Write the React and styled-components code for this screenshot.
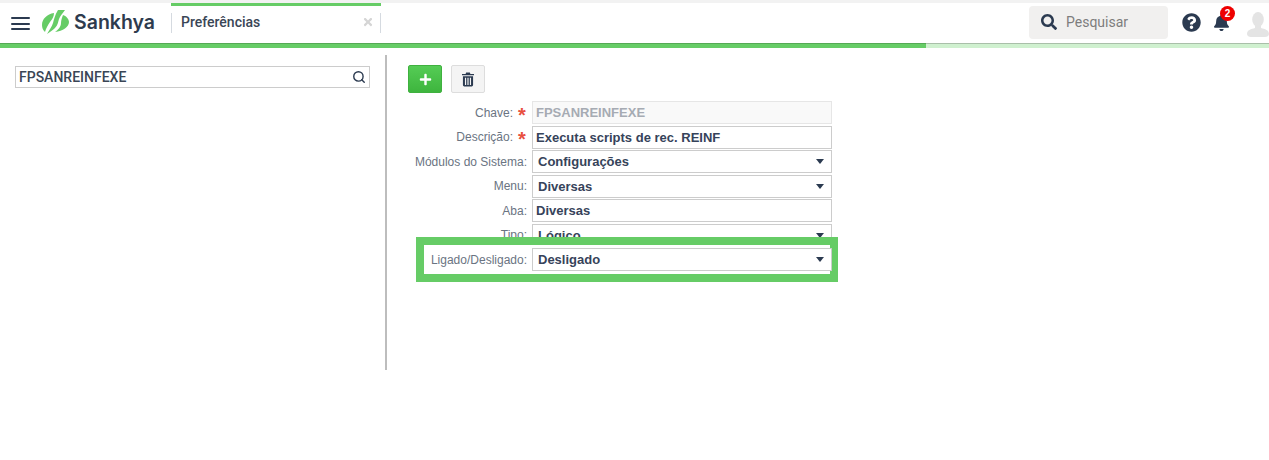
import React from 'react';
import styled, { createGlobalStyle } from 'styled-components';
import { FaSearch, FaQuestionCircle, FaBell, FaPlus, FaTimes } from 'react-icons/fa';
import { Search } from 'lucide-react';

const GlobalStyle = createGlobalStyle`
  html, body { margin: 0; padding: 0; background: #fff; }
  body { font-family: "Liberation Sans", Arial, sans-serif; }
`;

const Page = styled.div`
  width: 1269px;
  height: 460px;
  overflow: hidden;
  background: #fff;
  border-top: 3px solid #f2f2f2;
  box-sizing: border-box;
`;

const Header = styled.header`
  display: flex;
  align-items: stretch;
  height: 40px;
`;

const MenuButton = styled.div`
  width: 19px;
  margin: 14px 0 0 11px;
  height: 13px;
  display: flex;
  flex-direction: column;
  gap: 3.5px;
  span {
    display: block;
    height: 2px;
    background: #2b3a50;
    border-radius: 1px;
  }
`;

const Brand = styled.div`
  display: flex;
  align-items: center;
  gap: 5px;
  margin-left: 11px;
  width: 130px;
  padding-bottom: 3px;
`;

const BrandName = styled.span`
  font-family: Inter, "Open Sans", sans-serif;
  font-size: 19.5px;
  font-weight: 600;
  color: #2e3b4e;
`;

const Tab = styled.div`
  position: relative;
  width: 210px;
  box-sizing: border-box;
  border-top: 3px solid #66cc66;
  display: flex;
  align-items: center;
  justify-content: space-between;
  padding: 0 7px 6px 10px;
  font-family: Roboto, sans-serif;
  font-size: 14px;
  font-weight: 500;
  color: #3a4656;
  &::before, &::after {
    content: '';
    position: absolute;
    top: 7px;
    height: 20px;
    width: 1px;
    background: #d5dae0;
  }
  &::before { left: 0; }
  &::after { right: 0; }
`;

const TabClose = styled(FaTimes)`
  color: #d5d5d5;
  font-size: 12px;
`;

const HeaderRight = styled.div`
  margin-left: auto;
  display: flex;
  align-items: center;
  padding-bottom: 2px;
`;

const SearchPill = styled.div`
  width: 139px;
  height: 33px;
  box-sizing: border-box;
  padding-left: 12px;
  display: flex;
  align-items: center;
  gap: 9px;
  background: #f1f0ef;
  border-radius: 4px;
  font-family: Roboto, sans-serif;
  font-size: 14px;
  color: #7d7d7d;
  svg { color: #2b3a50; font-size: 16px; }
`;

const HelpIcon = styled(FaQuestionCircle)`
  color: #2b3a50;
  font-size: 19px;
  margin-left: 14px;
`;

const BellWrap = styled.div`
  position: relative;
  margin-left: 12px;
  width: 18px;
  height: 18px;
  color: #2b3a50;
  font-size: 17px;
  display: flex;
  align-items: center;
`;

const Badge = styled.span`
  position: absolute;
  top: -7px;
  left: 7px;
  width: 15px;
  height: 15px;
  border-radius: 50%;
  background: #ee0000;
  color: #fff;
  font-size: 10px;
  font-weight: 700;
  line-height: 15px;
  text-align: center;
`;

const Avatar = styled.svg`
  width: 22px;
  height: 25px;
  margin: 5px 0 0 16px;
`;

const Progress = styled.div`
  display: flex;
  height: 5px;
`;

const ProgressDone = styled.div`
  width: 926px;
  background: #66cc66;
  border-top: 1px solid #55a955;
  box-sizing: border-box;
`;

const ProgressRest = styled.div`
  flex: 1;
  background: #cff0cf;
  border-top: 1px solid #a9bfa9;
  box-sizing: border-box;
`;

const Body = styled.div`
  display: flex;
  align-items: flex-start;
`;

const Sidebar = styled.aside`
  width: 387px;
  height: 315px;
  margin-top: 7px;
  box-sizing: border-box;
  padding: 11px 15px 0 15px;
  border-right: 2px solid #bdbdbd;
  flex: none;
`;

const SearchBox = styled.div`
  height: 22px;
  box-sizing: border-box;
  border: 1px solid #cccccc;
  display: flex;
  align-items: center;
  justify-content: space-between;
  padding: 0 3px 0 3px;
  font-family: Roboto, sans-serif;
  font-size: 14px;
  font-weight: 500;
  color: #3a4656;
  svg { color: #2b3a50; }
`;

const Main = styled.main`
  padding: 17px 0 0 21px;
`;

const Toolbar = styled.div`
  display: flex;
  gap: 9px;
  margin-bottom: 7.5px;
`;

const ToolButton = styled.button`
  width: 34px;
  height: 28px;
  padding: 0;
  box-sizing: border-box;
  display: flex;
  align-items: center;
  justify-content: center;
  border-radius: 2px;
  border: 1px solid ${p => (p.$primary ? '#3fb13f' : '#dddddd')};
  background: ${p => (p.$primary ? 'linear-gradient(#55cc55, #3eb53e)' : '#f4f4f4')};
  color: ${p => (p.$primary ? '#fff' : '#2b3a50')};
  svg { font-size: 13px; }
`;

const Form = styled.div`
  display: flex;
  flex-direction: column;
  width: 424px;
`;

const Row = styled.div`
  display: flex;
  align-items: center;
  height: 24.5px;
  position: relative;
  ${p => p.$highlight && `
    z-index: 1;
    &::before {
      content: '';
      position: absolute;
      z-index: -1;
      left: 8px;
      top: -10.5px;
      width: 422px;
      height: 45px;
      box-sizing: border-box;
      background: #fff;
      border: 8px solid #66cc66;
    }
  `}
`;

const Label = styled.div`
  width: 119px;
  margin-right: 5px;
  font-size: 12px;
  color: #6a7482;
  white-space: nowrap;
  display: flex;
  justify-content: flex-end;
`;

const Required = styled.span`
  color: #e8503f;
  font-size: 20px;
  font-weight: 700;
  height: 14px;
  line-height: 19px;
  margin: 0 -1px 0 5px;
  width: 10px;
  text-align: left;
`;

const Field = styled.div`
  width: 300px;
  height: 23px;
  box-sizing: border-box;
  border: 1px solid ${p => (p.$readOnly ? '#e6e6e6' : '#cccccc')};
  background: ${p => (p.$readOnly ? '#f9f9f9' : '#fff')};
  color: ${p => (p.$readOnly ? '#a6abb3' : '#36435a')};
  display: flex;
  align-items: center;
  justify-content: space-between;
  padding: 0 ${p => (p.$select ? '5px' : '3px')};
  font-size: 13px;
  font-weight: 700;
  ${p => p.$select && `
    &::after {
      content: '';
      width: 0;
      height: 0;
      border-left: 4.5px solid transparent;
      border-right: 4.5px solid transparent;
      border-top: 5px solid #2b3a50;
      margin-right: 2px;
    }
  `}
`;

const LogoMark = () => (
  <svg width="28" height="24" viewBox="0 0 28 24">
    <path d="M13 3 C6 4 1 9 1 15 C1 18 2 20 4 22 C5 18 7 15 9 12 C11 9 13 7 13 3Z" fill="#66cc66" />
    <path d="M17 0 L24 0 C22 3 19 6 18 9 C17 12 17 15 14 18 C12 20 9 22 6 24 C8 20 11 17 12 13 C13 9 14 5 17 0Z" fill="#66cc66" />
    <path d="M22 5 C25 6 28 9 28 12 C28 17 22 21 14 22 C17 20 20 17 20 13 C20 10 21 8 22 5Z" fill="#66cc66" />
  </svg>
);

const TrashIcon = () => (
  <svg width="12" height="15" viewBox="0 0 13 15" fill="#2b3a50">
    <path d="M4.500 0h4l.6 1.500H13V3H0V1.500h3.900z" />
    <path d="M1 4h11v9.500a1.500 1.500 0 0 1-1.500 1.500h-8A1.500 1.500 0 0 1 1 13.500z M3.200 5.500v8h1.300v-8z M5.850 5.500v8h1.300v-8z M8.500 5.500v8h1.300v-8z" fillRule="evenodd" />
  </svg>
);

const rows = [
  { label: 'Chave:', value: 'FPSANREINFEXE', required: true, readOnly: true },
  { label: 'Descrição:', value: 'Executa scripts de rec. REINF', required: true },
  { label: 'Módulos do Sistema:', value: 'Configurações', select: true },
  { label: 'Menu:', value: 'Diversas', select: true },
  { label: 'Aba:', value: 'Diversas' },
  { label: 'Tipo:', value: 'Lógico', select: true },
  { label: 'Ligado/Desligado:', value: 'Desligado', select: true, highlight: true },
];

export default function App() {
  return (
    <Page>
      <GlobalStyle />
      <Header>
        <MenuButton><span /><span /><span /></MenuButton>
        <Brand>
          <LogoMark />
          <BrandName>Sankhya</BrandName>
        </Brand>
        <Tab>
          Preferências
          <TabClose />
        </Tab>
        <HeaderRight>
          <SearchPill><FaSearch />Pesquisar</SearchPill>
          <HelpIcon />
          <BellWrap>
            <FaBell />
            <Badge>2</Badge>
          </BellWrap>
          <Avatar viewBox="0 0 22 25">
            <ellipse cx="11" cy="7.500" rx="5.800" ry="7.500" fill="#e4e4e4" />
            <path d="M8 13 L14 13 L14 16 C18 17 22 18 22 22 C22 24 20 25 18 25 L4 25 C2 25 0 24 0 22 C0 18 4 17 8 16Z" fill="#e4e4e4" />
          </Avatar>
        </HeaderRight>
      </Header>
      <Progress>
        <ProgressDone />
        <ProgressRest />
      </Progress>
      <Body>
        <Sidebar>
          <SearchBox>
            FPSANREINFEXE
            <Search size={14} strokeWidth={2.4} />
          </SearchBox>
        </Sidebar>
        <Main>
          <Toolbar>
            <ToolButton $primary><FaPlus /></ToolButton>
            <ToolButton><TrashIcon /></ToolButton>
          </Toolbar>
          <Form>
            {rows.map(r => (
              <Row key={r.label} $highlight={r.highlight}>
                <Label>
                  {r.label}
                  {r.required && <Required>*</Required>}
                </Label>
                <Field $readOnly={r.readOnly} $select={r.select}>{r.value}</Field>
              </Row>
            ))}
          </Form>
        </Main>
      </Body>
    </Page>
  );
}
